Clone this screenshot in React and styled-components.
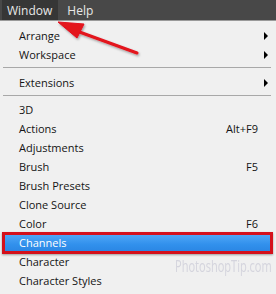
import React from "react";
import styled, { createGlobalStyle } from "styled-components";

const Global = createGlobalStyle`
  html, body { margin: 0; padding: 0; background: #f0f0f0; overflow: hidden; }
  #root { width: 276px; height: 294px; }
`;

const Frame = styled.div`
  position: relative;
  width: 276px;
  height: 294px;
  overflow: hidden;
  background: #f0f0f0;
  font-family: "Open Sans", "Noto Sans", sans-serif;
`;

const MenuBar = styled.div`
  display: flex;
  align-items: stretch;
  height: 21px;
  padding-left: 2px;
  background: #484848;
  border-bottom: 1px solid #9a9a9a;
  box-sizing: border-box;
`;

const BarItem = styled.div`
  display: flex;
  align-items: center;
  padding: ${(p) => (p.$active ? "0 6px 0 5px" : "0 0 0 9px")};
  background: ${(p) => (p.$active ? "#363636" : "transparent")};
  color: #e8e8e8;
  font-size: 12px;
`;

const Panel = styled.div`
  display: flex;
  flex-direction: column;
  padding-top: 5px;
`;

const Row = styled.div`
  position: relative;
  display: flex;
  align-items: center;
  height: 19px;
  padding: 0 18px 0 19px;
  font-size: 11px;
  color: ${(p) => (p.$selected ? "#ffffff" : "#141414")};
  z-index: ${(p) => (p.$selected ? 1 : 0)};

  ${(p) =>
    p.$selected &&
    `
    &::before {
      content: "";
      position: absolute;
      top: -1px;
      bottom: -2px;
      left: 2px;
      right: 3px;
      border: 3px solid #d4101b;
      background: linear-gradient(#4ea6f6, #3190ec 60%, #2b87e4);
      box-shadow: 0 1px 2px rgba(0,0,0,0.35);
      z-index: -1;
    }
  `}
`;

const Label = styled.span`
  flex: 1;
`;

const Shortcut = styled.span`
  font-size: 11px;
`;

const SubArrow = styled.span`
  position: absolute;
  right: 8px;
  top: 6px;
  width: 0;
  height: 0;
  border-top: 4px solid transparent;
  border-bottom: 4px solid transparent;
  border-left: 4px solid #000;
`;

const Separator = styled.div`
  height: 1px;
  margin: ${(p) => (p.$first ? "3px 5px 5px 3px" : "3px 5px 4px 3px")};
  background: #a8a8a8;
`;

const ArrowSvg = styled.svg`
  position: absolute;
  left: 0;
  top: 0;
  pointer-events: none;
`;

const Watermark = styled.div`
  position: absolute;
  left: 175px;
  top: 255px;
  width: 140px;
  transform: scaleX(0.69);
  transform-origin: left top;
  font-family: "Open Sans", sans-serif;
  font-size: 16px;
  line-height: 22px;
  color: rgba(205, 205, 216, 0.8);
  pointer-events: none;
  white-space: nowrap;
`;

const items = [
  { t: "3D" },
  { t: "Actions", s: "Alt+F9" },
  { t: "Adjustments" },
  { t: "Brush", s: "F5" },
  { t: "Brush Presets" },
  { t: "Clone Source" },
  { t: "Color", s: "F6" },
  { t: "Channels", sel: true },
  { t: "Character" },
  { t: "Character Styles" },
];

export default function App() {
  return (
    <>
      <Global />
      <Frame>
        <MenuBar>
          <BarItem $active>Window</BarItem>
          <BarItem>Help</BarItem>
        </MenuBar>
        <Panel>
          <Row>
            <Label>Arrange</Label>
            <SubArrow />
          </Row>
          <Row>
            <Label>Workspace</Label>
            <SubArrow />
          </Row>
          <Separator $first />
          <Row>
            <Label>Extensions</Label>
            <SubArrow />
          </Row>
          <Separator />
          {items.map((it) => (
            <Row key={it.t} $selected={it.sel}>
              <Label>{it.t}</Label>
              {it.s && <Shortcut>{it.s}</Shortcut>}
            </Row>
          ))}
        </Panel>
        <Watermark>PhotoshopTip.com</Watermark>
        <ArrowSvg width="276" height="294" viewBox="0 0 276 294">
          <defs>
            <filter id="sh" x="-20%" y="-20%" width="140%" height="140%">
              <feDropShadow dx="1" dy="1.5" stdDeviation="1" floodColor="#000" floodOpacity="0.35" />
            </filter>
          </defs>
          <g filter="url(#sh)" fill="#e3121c" stroke="#e3121c">
            <line x1="137" y1="53" x2="74" y2="30" strokeWidth="3" strokeLinecap="round" />
            <polygon points="58,22 84,24 77,38" strokeWidth="1" strokeLinejoin="round" />
          </g>
        </ArrowSvg>
      </Frame>
    </>
  );
}
